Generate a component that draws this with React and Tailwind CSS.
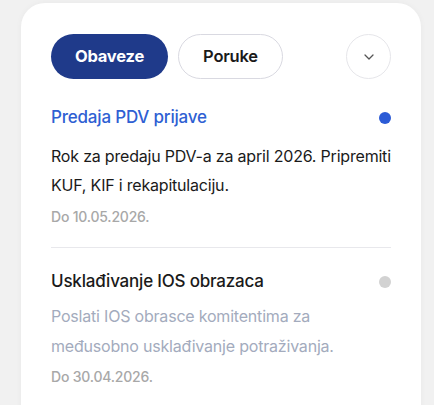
import React from "react";

function Chevron() {
  return (
    <svg width="16" height="16" viewBox="0 0 24 24" fill="none" stroke="#555" strokeWidth="1.9" strokeLinecap="round" strokeLinejoin="round">
      <path d="M6 9l6 6 6-6" />
    </svg>
  );
}

export default function App() {
  return (
    <div className="min-h-[405px] w-[434px] bg-[#f1f1f1] pt-[3px] pl-[21px] overflow-hidden" style={{ fontFamily: "Inter, 'Noto Sans', sans-serif" }}>
      <div className="w-[400px] h-[420px] bg-white rounded-t-[24px] shadow-[0_0_6px_rgba(0,0,0,0.04)] px-[30px] pt-[31px]">
        <div className="flex items-center">
          <button className="h-[45px] w-[117px] rounded-full bg-[#1f3a8a] text-white text-[16.5px] font-bold tracking-[-0.2px]">Obaveze</button>
          <button className="ml-[10px] h-[45px] w-[105px] rounded-full border border-[#d9d9e1] bg-white text-[#1a1a1a] text-[16.5px] font-semibold tracking-[-0.2px]">Poruke</button>
          <button className="ml-auto h-[45px] w-[45px] rounded-full border border-[#e6e6ea] flex items-center justify-center">
            <Chevron />
          </button>
        </div>

        <div className="mt-[27px] pb-[20px] border-b border-[#e8e8ec]">
          <div className="flex items-center justify-between h-[24px]">
            <span className="text-[17px] font-medium text-[#2f5fd3] tracking-[-0.2px]">Predaja PDV prijave</span>
            <span className="w-[12px] h-[12px] rounded-full bg-[#2b5bd6]"></span>
          </div>
          <p className="mt-[12px] text-[16px] leading-[28.5px] text-[#1a1a1a] tracking-[-0.2px]">Rok za predaju PDV-a za april 2026. Pripremiti KUF, KIF i rekapitulaciju.</p>
          <p className="mt-[8px] text-[14px] leading-[20px] font-medium text-[#a8a8a8] tracking-[-0.2px]">Do 10.05.2026.</p>
        </div>

        <div className="pt-[22px]">
          <div className="flex items-center justify-between h-[24px]">
            <span className="text-[17px] font-medium text-[#1a1a1a] tracking-[-0.2px]">Usklađivanje IOS obrazaca</span>
            <span className="w-[12px] h-[12px] rounded-full bg-[#d2d2d2]"></span>
          </div>
          <p className="mt-[7px] text-[16px] leading-[30px] text-[#a3abbd] tracking-[-0.2px]">Poslati IOS obrasce komitentima za međusobno usklađivanje potraživanja.</p>
          <p className="mt-[6px] text-[14px] leading-[20px] font-medium text-[#a8a8a8] tracking-[-0.2px]">Do 30.04.2026.</p>
          <div className="mt-[18px] mx-[18px] h-px bg-[#f2f2f5]"></div>
        </div>
      </div>
    </div>
  );
}
